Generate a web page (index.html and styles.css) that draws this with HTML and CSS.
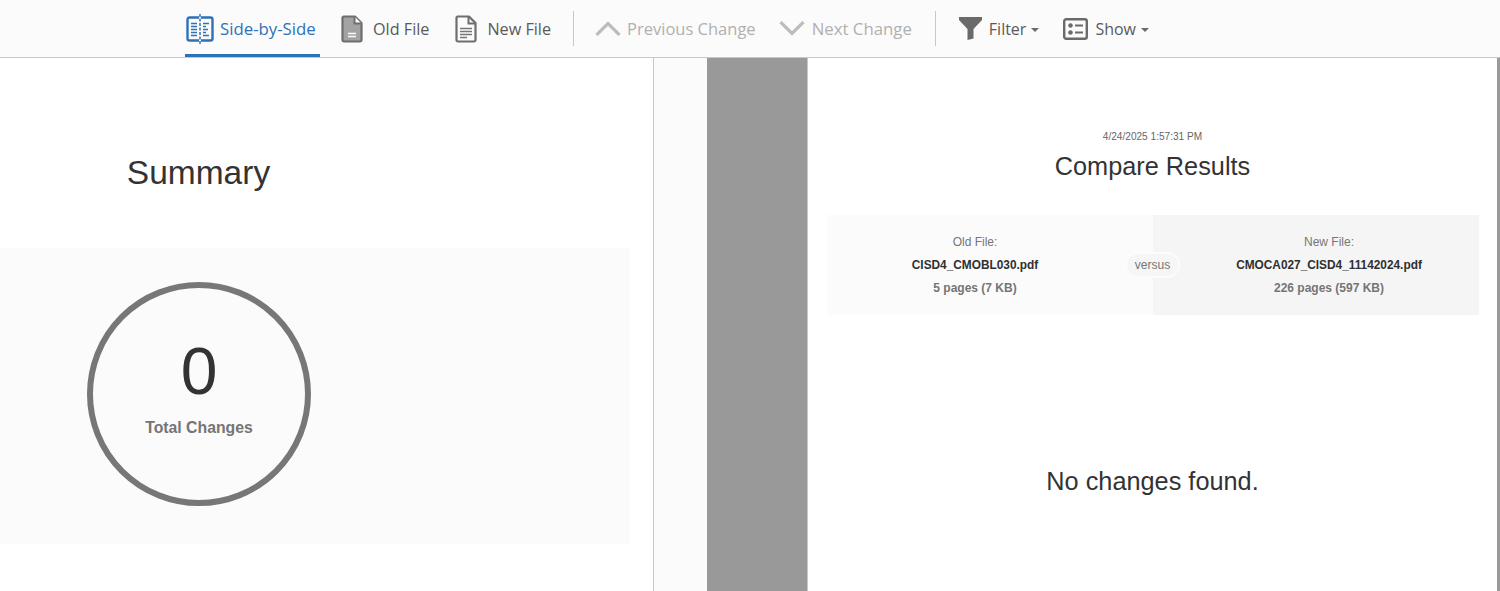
FILE: index.html
```html
<!DOCTYPE html>
<html lang="en">
<head>
<meta charset="utf-8">
<title>Compare Results</title>
<link rel="stylesheet" href="styles.css">
</head>
<body>
<header class="toolbar">
  <button class="tool tool-active tool-side">
    <svg class="icon" width="28" height="30" viewBox="0 0 28 30" fill="none">
      <path d="M13 3.5H3.5A2 2 0 0 0 1.5 5.500V24.500A2 2 0 0 0 3.500 26.500H13M15 3.500H24.500A2 2 0 0 1 26.500 5.500V24.500A2 2 0 0 1 24.500 26.500H15" stroke="#2d72b8" stroke-width="2.400"/>
      <path d="M14 0V30" stroke="#2d72b8" stroke-width="1.500" stroke-dasharray="3 1.500"/>
      <path d="M5 9.500H11M5 12.500H11M5 15.500H11M5 18.500H11M5 21.500H11" stroke="#2d72b8" stroke-width="1.500"/>
      <path d="M17 9.500H23M17 12.500H20M17 15.500H22M17 18.500H20M17 21.500H23" stroke="#2d72b8" stroke-width="1.500"/>
    </svg>
    <span>Side-by-Side</span>
  </button>
  <button class="tool tool-old">
    <svg class="icon" width="22" height="28" viewBox="0 0 22 28">
      <path d="M2.500 1.500H14L20.500 8V25A1.500 1.500 0 0 1 19 26.500H3A1.500 1.500 0 0 1 1.500 25V2.500Z" fill="#a3a3a3" stroke="#6e6e6e" stroke-width="2.200" stroke-linejoin="round"/>
      <path d="M13.500 1.500V8.500H20.500" fill="#fafafa" stroke="#6e6e6e" stroke-width="2"/>
      <path d="M7 18.500H15M7 21.500H15" stroke="#fafafa" stroke-width="1.400"/>
    </svg>
    <span>Old File</span>
  </button>
  <button class="tool tool-new">
    <svg class="icon" width="22" height="28" viewBox="0 0 22 28">
      <path d="M2.500 1.500H14L20.500 8V25A1.500 1.500 0 0 1 19 26.500H3A1.500 1.500 0 0 1 1.500 25V2.500Z" fill="#fbfbfb" stroke="#6e6e6e" stroke-width="2.200" stroke-linejoin="round"/>
      <path d="M13.500 1.500V8.500H20.500" fill="none" stroke="#6e6e6e" stroke-width="2"/>
      <path d="M5 13.500H17M5 16.500H17M5 19.500H17M5 22.500H12" stroke="#777" stroke-width="1.400"/>
    </svg>
    <span>New File</span>
  </button>
  <i class="sep sep-first"></i>
  <button class="tool tool-off tool-prev">
    <svg class="icon" width="26" height="15" viewBox="0 0 26 15" fill="none">
      <path d="M1.500 14L13 2.500L24.500 14" stroke="#bdbdbd" stroke-width="3.200"/>
    </svg>
    <span>Previous Change</span>
  </button>
  <button class="tool tool-off tool-next">
    <svg class="icon" width="26" height="15" viewBox="0 0 26 15" fill="none">
      <path d="M1.500 1L13 12.500L24.500 1" stroke="#bdbdbd" stroke-width="3.200"/>
    </svg>
    <span>Next Change</span>
  </button>
  <i class="sep sep-second"></i>
  <button class="tool tool-filter">
    <svg class="icon" width="23" height="23" viewBox="0 0 23 23">
      <path d="M0 0H23V3L14.500 12V21.500L8.500 23V12L0 3Z" fill="#6a6a6a"/>
    </svg>
    <span>Filter</span><b class="caret"></b>
  </button>
  <button class="tool tool-show">
    <svg class="icon" width="25" height="22" viewBox="0 0 25 22" fill="none">
      <rect x="1.200" y="1.200" width="22.600" height="19.600" rx="2" stroke="#6a6a6a" stroke-width="2.400"/>
      <circle cx="7.500" cy="7.500" r="2.300" fill="#6a6a6a"/>
      <circle cx="7.500" cy="14.500" r="2.300" fill="#6a6a6a"/>
      <path d="M12 7.500H20M12 14.500H20" stroke="#6a6a6a" stroke-width="2"/>
    </svg>
    <span>Show</span><b class="caret"></b>
  </button>
</header>
<main class="panes">
  <section class="summary">
    <h2 class="summary-title">Summary</h2>
    <div class="summary-panel">
      <div class="ring">
        <div class="ring-count">0</div>
        <div class="ring-label">Total Changes</div>
      </div>
    </div>
  </section>
  <section class="viewer">
    <div class="gutter"></div>
    <div class="gray-gap"></div>
    <article class="page">
      <div class="page-date">4/24/2025 1:57:31 PM</div>
      <h1 class="page-title">Compare Results</h1>
      <div class="files">
        <div class="file file-old">
          <div class="file-label">Old File:</div>
          <div class="file-name">CISD4_CMOBL030.pdf</div>
          <div class="file-meta">5 pages (7 KB)</div>
        </div>
        <div class="file file-new">
          <div class="file-label">New File:</div>
          <div class="file-name">CMOCA027_CISD4_11142024.pdf</div>
          <div class="file-meta">226 pages (597 KB)</div>
        </div>
        <div class="versus">versus</div>
      </div>
      <p class="no-changes">No changes found.</p>
    </article>
    <div class="scrollbar"></div>
  </section>
</main>
</body>
</html>
```
FILE: styles.css
```css
* { box-sizing: border-box; }
html, body { margin: 0; height: 100%; overflow: hidden; background: #fff; }
body { font-family: "Liberation Sans", Arial, sans-serif; color: #2f2f2f; }

.toolbar {
  display: flex;
  align-items: stretch;
  height: 58px;
  padding-left: 185px;
  background: #fbfbfb;
  border-bottom: 1px solid #c8c8c8;
  font-family: "Open Sans", "Noto Sans", sans-serif;
  font-size: 16px;
}
.tool {
  display: flex;
  align-items: center;
  height: 57px;
  padding: 0;
  border: 0;
  background: none;
  font: inherit;
  color: #5a5a5a;
  white-space: nowrap;
}
.tool-active { color: #2d72b8; border-bottom: 3px solid #2d72b8; }
.tool-off { color: #b0b0b0; }
.icon { flex: none; }
.tool-side { width: 135px; padding: 3px 0 0 1px; font-size: 16.800px; }
.tool-side span { margin-left: 6px; }
.tool-old { margin-left: 21px; font-size: 16.200px; }
.tool-old span { margin-left: 10px; }
.tool-new { margin-left: 26px; font-size: 16.200px; }
.tool-new span { margin-left: 10px; }
.tool-prev { margin-left: 21px; font-size: 16.500px; }
.tool-prev span { margin-left: 6px; }
.tool-next { margin-left: 23px; font-size: 16.800px; }
.tool-next span { margin-left: 7px; }
.tool-filter { margin-left: 23px; }
.tool-filter span { margin-left: 7px; }
.tool-show { margin-left: 24px; }
.tool-show span { margin-left: 7px; }
.sep { flex: none; width: 1px; height: 35px; margin-top: 11px; background: #c8c8c8; }
.sep-first { margin-left: 22px; }
.sep-second { margin-left: 23px; }
.caret {
  width: 0;
  height: 0;
  margin: 2px 0 0 5px;
  border-left: 4px solid transparent;
  border-right: 4px solid transparent;
  border-top: 4px solid #6a6a6a;
}

.panes { display: flex; height: 533px; }

.summary { flex: none; width: 654px; border-right: 1px solid #c8c8c8; padding-right: 23px; }
.summary-title {
  width: 397px;
  margin: 0;
  padding-top: 96px;
  height: 190px;
  text-align: center;
  font-size: 33.500px;
  font-weight: 400;
  line-height: 38px;
  color: #333;
}
.summary-panel { height: 296px; padding: 34px 0 0 87px; background: #fbfbfb; }
.ring {
  display: flex;
  flex-direction: column;
  align-items: center;
  width: 224px;
  height: 224px;
  padding-top: 45px;
  border: 6px solid #777;
  border-radius: 50%;
}
.ring-count { font-size: 66px; line-height: 76px; color: #333; }
.ring-label { margin-top: 9px; font-size: 15.800px; font-weight: 700; line-height: 20px; color: #757575; }

.viewer { flex: 1; display: flex; min-width: 0; }
.gutter { flex: none; width: 53px; background: #fbfbfb; }
.gray-gap { flex: none; width: 100px; background: #999; }
.page {
  flex: 1;
  padding: 73px 19px 0 19px;
  border-left: 1px solid #c8c8c8;
  background: #fff;
  text-align: center;
}
.scrollbar { flex: none; width: 3px; background: #999; }
.page-date { font-size: 10.100px; line-height: 12px; color: #666; }
.page-title { margin: 8px 0 0; font-size: 25.300px; font-weight: 400; line-height: 30px; color: #333; }
.files { position: relative; display: flex; height: 100px; margin: 34px -1px 0 0; }
.file { flex: none; width: 50%; padding-top: 16px; font-size: 12px; line-height: 23px; color: #757575; }
.file-old { padding-right: 30px; background: #fbfbfb; }
.file-new { padding-left: 26px; background: #f5f5f5; }
.file-name { font-size: 11.850px; font-weight: 700; color: #2f2f2f; }
.file-meta { font-weight: 700; color: #757575; }
.versus {
  position: absolute;
  left: 50%;
  top: 37px;
  width: 55px;
  height: 26px;
  margin-left: -28px;
  border: 2px solid #fcfcfc;
  border-radius: 13px;
  background: #f6f6f6;
  font-size: 12px;
  line-height: 22px;
  color: #757575;
}
.no-changes { margin: 151px 0 0; font-size: 25.300px; line-height: 30px; color: #333; }
```
